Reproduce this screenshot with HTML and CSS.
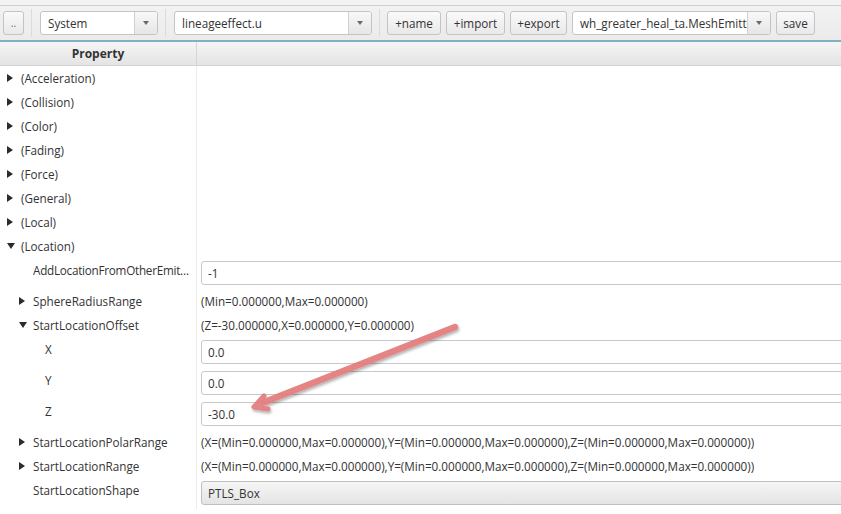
FILE: index.html
```html
<!DOCTYPE html>
<html>
<head>
<meta charset="utf-8">
<link rel="stylesheet" href="styles.css">
</head>
<body>
<div class="app">
  <div class="topstrip"></div>
  <div class="toolbar">
    <button class="btn dots">..</button>
    <span class="sep"></span>
    <div class="combo c-system"><span class="ctext">System</span><span class="carrow"><i></i></span></div>
    <span class="sep"></span>
    <div class="combo c-file"><span class="ctext">lineageeffect.u</span><span class="carrow"><i></i></span></div>
    <span class="sep sep-b"></span>
    <button class="btn b-name">+name</button>
    <button class="btn b-import">+import</button>
    <button class="btn b-export">+export</button>
    <div class="combo c-emitter"><span class="ctext">wh_greater_heal_ta.MeshEmitter</span><span class="carrow"><i></i></span></div>
    <button class="btn b-save">save</button>
  </div>
  <div class="accent"></div>
  <div class="table">
    <div class="header"><div class="hcell name">Property</div><div class="hcell"></div></div>
    <div class="row"><div class="name l0"><span class="tri right"></span>(Acceleration)</div><div class="val"></div></div>
    <div class="row"><div class="name l0"><span class="tri right"></span>(Collision)</div><div class="val"></div></div>
    <div class="row"><div class="name l0"><span class="tri right"></span>(Color)</div><div class="val"></div></div>
    <div class="row"><div class="name l0"><span class="tri right"></span>(Fading)</div><div class="val"></div></div>
    <div class="row"><div class="name l0"><span class="tri right"></span>(Force)</div><div class="val"></div></div>
    <div class="row"><div class="name l0"><span class="tri right"></span>(General)</div><div class="val"></div></div>
    <div class="row"><div class="name l0"><span class="tri right"></span>(Local)</div><div class="val"></div></div>
    <div class="row"><div class="name l0"><span class="tri down"></span>(Location)</div><div class="val"></div></div>
    <div class="row tall"><div class="name l1"><span class="tri none"></span><span class="ell">AddLocationFromOtherEmitter</span></div><div class="val"><div class="field">-1</div></div></div>
    <div class="row"><div class="name l1"><span class="tri right"></span>SphereRadiusRange</div><div class="val">(Min=0.000000,Max=0.000000)</div></div>
    <div class="row"><div class="name l1"><span class="tri down"></span>StartLocationOffset</div><div class="val">(Z=-30.000000,X=0.000000,Y=0.000000)</div></div>
    <div class="row tall"><div class="name l2"><span class="tri none"></span>X</div><div class="val"><div class="field">0.0</div></div></div>
    <div class="row tall"><div class="name l2"><span class="tri none"></span>Y</div><div class="val"><div class="field">0.0</div></div></div>
    <div class="row tall"><div class="name l2"><span class="tri none"></span>Z</div><div class="val"><div class="field">-30.0</div></div></div>
    <div class="row"><div class="name l1"><span class="tri right"></span>StartLocationPolarRange</div><div class="val">(X=(Min=0.000000,Max=0.000000),Y=(Min=0.000000,Max=0.000000),Z=(Min=0.000000,Max=0.000000))</div></div>
    <div class="row"><div class="name l1"><span class="tri right"></span>StartLocationRange</div><div class="val">(X=(Min=0.000000,Max=0.000000),Y=(Min=0.000000,Max=0.000000),Z=(Min=0.000000,Max=0.000000))</div></div>
    <div class="row tall"><div class="name l1"><span class="tri none"></span>StartLocationShape</div><div class="val"><div class="field select">PTLS_Box</div></div></div>
  </div>
  <svg class="annot" width="841" height="514" viewBox="0 0 841 514">
    <defs>
      <filter id="sh" x="-10%" y="-10%" width="120%" height="130%">
        <feGaussianBlur in="SourceAlpha" stdDeviation="1.5"/>
        <feOffset dx="1" dy="2"/>
        <feComponentTransfer><feFuncA type="linear" slope="0.35"/></feComponentTransfer>
        <feMerge><feMergeNode/><feMergeNode in="SourceGraphic"/></feMerge>
      </filter>
    </defs>
    <g filter="url(#sh)" fill="none" stroke="#e27a7a" stroke-linecap="round" stroke-linejoin="round" opacity="0.92">
      <path d="M455 327 L262 403" stroke-width="6.5"/>
      <path d="M264 396 L254 407 L268 409" stroke-width="5"/>
    </g>
  </svg>
</div>
</body>
</html>
```
FILE: styles.css
```css
* { box-sizing: border-box; }
html, body { margin: 0; padding: 0; }
body {
  width: 841px;
  height: 514px;
  overflow: hidden;
  background: #ffffff;
  font-family: "Open Sans", "Noto Sans", "DejaVu Sans", sans-serif;
  font-size: 11.7px;
  color: #333333;
}
.app { position: relative; width: 841px; height: 514px; overflow: hidden; }

.topstrip {
  height: 6px;
  background: #f3f3f3;
  border-bottom: 1px solid #cfcfcf;
}
.toolbar {
  height: 34px;
  display: flex;
  align-items: center;
  padding: 0 0 0 3px;
  background: linear-gradient(#f2f2f2, #ebebeb);
}
.btn {
  font: inherit;
  color: #333;
  height: 24px;
  padding: 0;
  border: 1px solid #c4c4c4;
  border-radius: 3px;
  background: linear-gradient(#fafafa, #e9e9e9);
  margin-right: 5px;
  display: flex;
  align-items: center;
  justify-content: center;
}
.dots { width: 21px; font-size: 10px; color: #666; margin-right: 0; }
.b-name { width: 54px; }
.b-import { width: 59px; }
.b-export { width: 57px; }
.b-save { width: 39px; }
.sep {
  width: 1px;
  height: 28px;
  background: #dcdcdc;
  margin: 0 8px 0 7px;
}
.sep-b { margin: 0 7px 0 7px; }
.combo {
  height: 24px;
  display: flex;
  border: 1px solid #c4c4c4;
  border-radius: 3px;
  background: #fff;
  overflow: hidden;
}
.ctext {
  flex: 1;
  padding-left: 7px;
  display: flex;
  align-items: center;
  white-space: nowrap;
  overflow: hidden;
  min-width: 0;
}
.carrow {
  width: 23px;
  flex: none;
  border-left: 1px solid #d0d0d0;
  background: linear-gradient(#f8f8f8, #e6e6e6);
  display: flex;
  align-items: center;
  justify-content: center;
}
.carrow i {
  width: 0; height: 0;
  border-left: 3.5px solid transparent;
  border-right: 3.5px solid transparent;
  border-top: 4px solid #6a6a6a;
}
.c-system { width: 118px; }
.c-file { width: 198px; }
.c-emitter { width: 199px; margin-right: 5px; }

.accent {
  height: 2px;
  background: #7eb1c2;
}

.table { position: relative; }
.header {
  display: grid;
  grid-template-columns: 197px 1fr;
  height: 24px;
  background: linear-gradient(#f5f5f5, #e4e4e4);
  border-bottom: 1px solid #d2d2d2;
}
.hcell {
  display: flex;
  align-items: center;
  justify-content: center;
  font-weight: bold;
  font-size: 12px;
  color: #333;
}
.hcell.name { border-right: 1px solid #d6d6d6; }

.row {
  display: grid;
  grid-template-columns: 197px 1fr;
  height: 24px;
}
.row.tall { height: 31px; }
.row .name {
  display: flex;
  align-items: center;
  border-right: 1px solid #ececec;
  white-space: nowrap;
  overflow: hidden;
  min-width: 0;
}
.row.tall .name { padding-bottom: 7px; }
.l0 { padding-left: 4px; }
.l1 { padding-left: 16px; }
.l2 { padding-left: 28px; }
.tri {
  width: 17px;
  flex: none;
  display: flex;
  align-items: center;
  justify-content: flex-start;
  padding-left: 3px;
}
.tri.right::before {
  content: "";
  width: 0; height: 0;
  border-top: 4px solid transparent;
  border-bottom: 4px solid transparent;
  border-left: 6px solid #2b2b2b;
}
.tri.down::before {
  content: "";
  width: 0; height: 0;
  border-left: 4px solid transparent;
  border-right: 4px solid transparent;
  border-top: 6px solid #2b2b2b;
}
.ell {
  overflow: hidden;
  text-overflow: ellipsis;
  white-space: nowrap;
  padding-right: 4px;
  letter-spacing: -0.25px;
}
.val {
  display: flex;
  align-items: center;
  padding-left: 4px;
  white-space: nowrap;
  min-width: 0;
}
.field {
  width: 700px;
  flex: none;
  height: 24px;
  border: 1px solid #c8c8c8;
  border-radius: 3px;
  background: #fff;
  display: flex;
  align-items: center;
  padding-left: 6px;
  margin-top: -1px;
}
.field.select {
  background: linear-gradient(#f6f6f6, #e4e4e4);
  border-color: #c0c0c0;
}

.annot {
  position: absolute;
  left: 0;
  top: 0;
  pointer-events: none;
}
```
